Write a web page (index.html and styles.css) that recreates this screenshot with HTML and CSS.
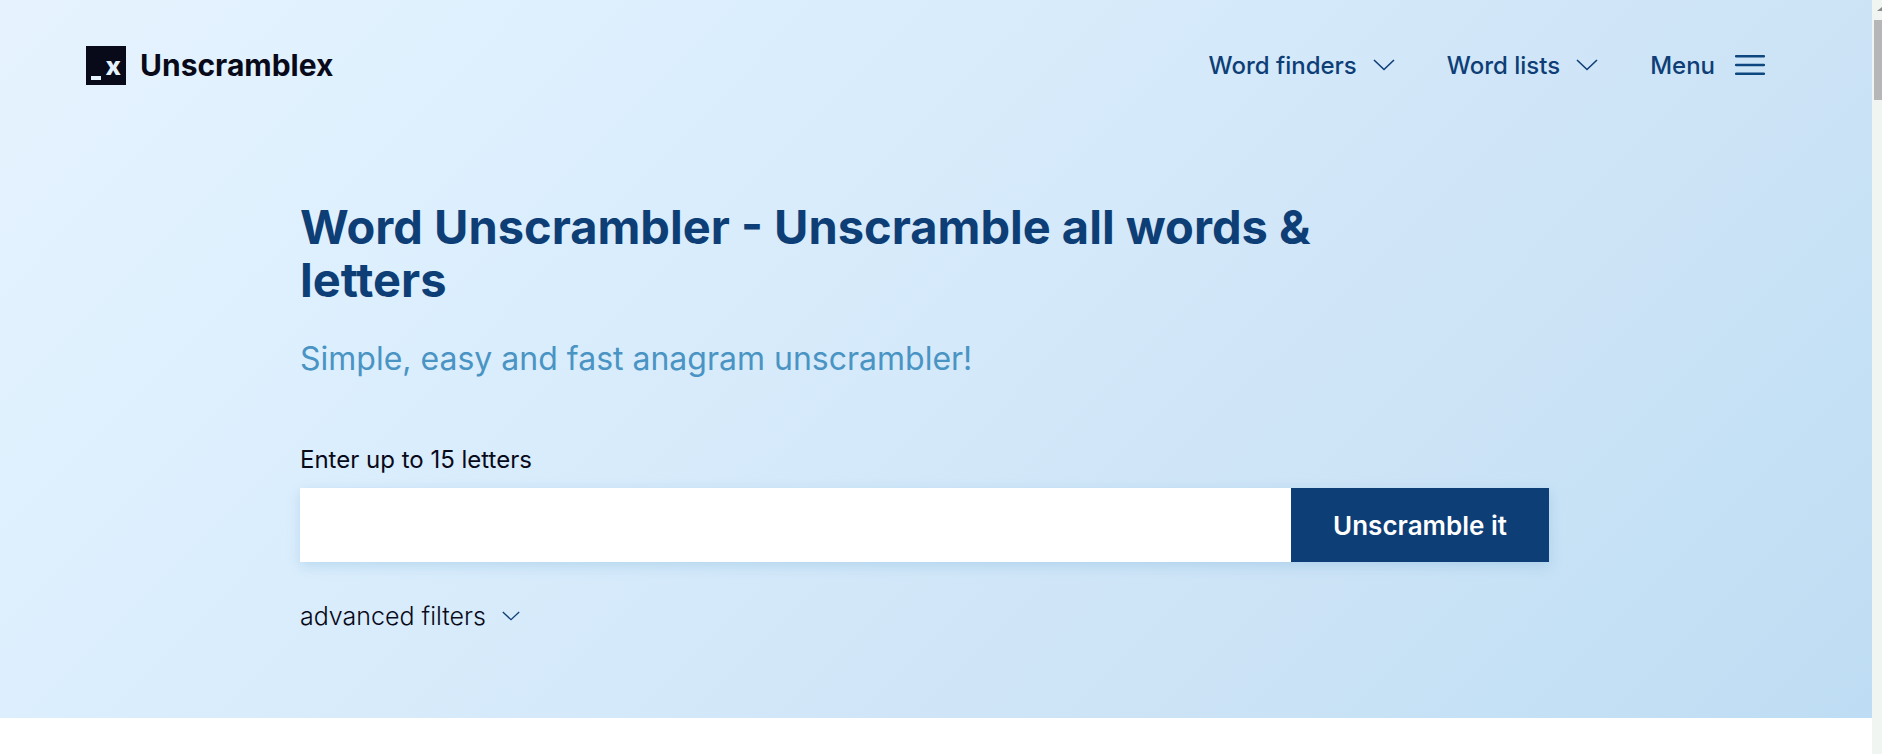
FILE: index.html
```html
<!DOCTYPE html>
<html lang="en">
<head>
<meta charset="utf-8">
<meta name="viewport" content="width=device-width, initial-scale=1">
<title>Unscramblex</title>
<link rel="stylesheet" href="styles.css">
</head>
<body>
<div class="page">
  <div class="hero">
    <header class="header">
      <a class="brand" href="#">
        <span class="brand-mark" aria-hidden="true"><span class="brand-cursor"></span><span class="brand-letter">x</span></span>
        <span class="brand-name">Unscramblex</span>
      </a>
      <nav class="nav">
        <button class="nav-item" type="button"><span>Word finders</span>
          <svg class="chevron" viewBox="0 0 22 12" aria-hidden="true"><path d="M1 1 L11 10.5 L21 1"/></svg>
        </button>
        <button class="nav-item" type="button"><span>Word lists</span>
          <svg class="chevron" viewBox="0 0 22 12" aria-hidden="true"><path d="M1 1 L11 10.5 L21 1"/></svg>
        </button>
        <button class="nav-item nav-menu" type="button"><span>Menu</span>
          <svg class="burger" viewBox="0 0 30 20" aria-hidden="true"><path d="M1 1.2 H29 M1 10 H29 M1 18.8 H29"/></svg>
        </button>
      </nav>
    </header>
    <main class="search">
      <h1 class="title">Word Unscrambler - Unscramble all words &amp; letters</h1>
      <p class="subtitle">Simple, easy and fast anagram unscrambler!</p>
      <form class="form">
        <label class="label" for="letters">Enter up to 15 letters</label>
        <div class="field">
          <input class="input" id="letters" type="text" maxlength="15">
          <button class="submit" type="button">Unscramble it</button>
        </div>
        <button class="filters" type="button"><span>advanced filters</span>
          <svg class="chevron chevron-small" viewBox="0 0 22 12" aria-hidden="true"><path d="M1 1 L11 10.5 L21 1"/></svg>
        </button>
      </form>
    </main>
  </div>
  <div class="scrollbar" aria-hidden="true">
    <svg class="scroll-arrow" viewBox="0 0 10 20"><path d="M5 11 L10 7 V11 Z"/></svg>
    <div class="scroll-thumb"></div>
  </div>
</div>
</body>
</html>
```

FILE: styles.css
```css
* {
  box-sizing: border-box;
}

body {
  margin: 0;
  background: #fff;
  color: #080a1a;
  font-family: Inter, "Open Sans", sans-serif;
}

button {
  padding: 0;
  border: 0;
  background: none;
  color: inherit;
  font: inherit;
  cursor: pointer;
}

.page {
  display: flex;
  min-height: 100vh;
}

.hero {
  flex: 1;
  align-self: flex-start;
  padding: 32px 23px 86px 0;
  background: linear-gradient(135deg, #e6f3fe 0%, #def0fe 22%, #cce3f6 73%, #c5e1f5 85%, #bedcf3 100%);
}

.header {
  display: flex;
  align-items: center;
  justify-content: space-between;
  height: 66px;
  padding: 0 84px 0 86px;
}

.brand {
  display: flex;
  align-items: center;
  gap: 14px;
  color: #080a1a;
  text-decoration: none;
}

.brand-mark {
  display: flex;
  align-items: flex-end;
  justify-content: space-between;
  width: 40px;
  height: 39px;
  padding: 0 5px 5px;
  background: #080a1a;
  color: #e6f3fe;
}

.brand-cursor {
  width: 10px;
  height: 4px;
  background: #e6f3fe;
}

.brand-letter {
  padding-bottom: 2px;
  font-size: 26px;
  font-weight: 800;
  line-height: 24px;
}

.brand-name {
  font-size: 30px;
  font-weight: 700;
}

.nav {
  display: flex;
  align-items: center;
  gap: 52px;
  color: #0e3e76;
  font-size: 24px;
  font-weight: 500;
}

.nav-item {
  display: flex;
  align-items: center;
  gap: 16px;
  white-space: nowrap;
}

.nav-menu {
  gap: 20px;
}

.chevron {
  width: 22px;
  height: 12px;
  fill: none;
  stroke: #0e3e76;
  stroke-width: 1.6;
}

.chevron-small {
  width: 18px;
  height: 10px;
}

.burger {
  width: 30px;
  height: 20px;
  fill: none;
  stroke: #0e4680;
  stroke-width: 2.4;
  stroke-linecap: round;
}

.search {
  max-width: 1249px;
  margin: 102px auto 0;
}

.title {
  max-width: 1080px;
  margin: 0;
  color: #0e3e76;
  font-size: 47px;
  font-weight: 700;
  line-height: 53px;
}

.subtitle {
  margin: 29px 0 0;
  color: #4a94c4;
  font-size: 32px;
  font-weight: 400;
  line-height: 48px;
}

.form {
  margin-top: 57px;
}

.label {
  display: block;
  font-size: 24px;
  line-height: 40px;
}

.field {
  display: flex;
  height: 74px;
  margin-top: 8px;
  box-shadow: 0 4px 12px rgba(74, 148, 196, 0.22);
}

.input {
  flex: 1;
  min-width: 0;
  padding: 0 24px;
  border: 0;
  background: #fff;
  font: inherit;
  font-size: 24px;
}

.submit {
  width: 258px;
  background: #0e3e76;
  color: #fff;
  font-size: 26px;
  font-weight: 600;
}

.filters {
  display: flex;
  align-items: center;
  gap: 16px;
  margin-top: 38px;
  font-size: 25px;
  font-weight: 300;
  line-height: 32px;
}

.scrollbar {
  width: 10px;
  background: #f0f5f2;
}

.scroll-arrow {
  display: block;
  width: 10px;
  height: 20px;
  fill: #8a8a8a;
}

.scroll-thumb {
  height: 80px;
  margin-left: 2px;
  background: #b6b6b8;
}
```
